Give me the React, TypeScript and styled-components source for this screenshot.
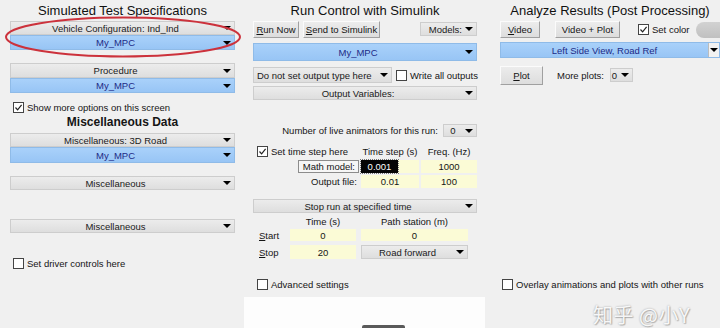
import React from "react";
import styled, { createGlobalStyle } from "styled-components";

const Global = createGlobalStyle`
  html, body {
    margin: 0;
    padding: 0;
    background: #f0f0f0;
  }
`;

const Page = styled.div`
  position: relative;
  display: flex;
  width: 720px;
  height: 328px;
  padding: 2px 0 0 10px;
  box-sizing: border-box;
  overflow: hidden;
  background: #f0f0f0;
  font-family: "Liberation Sans", Arial, sans-serif;
  font-size: 9.5px;
  color: #151515;
`;

const Column = styled.div<{ $w: number; $ml?: number }>`
  display: flex;
  flex-direction: column;
  flex-shrink: 0;
  width: ${(p) => p.$w}px;
  margin-left: ${(p) => p.$ml ?? 0}px;
`;

const Title = styled.div`
  height: 19px;
  line-height: 17px;
  font-size: 13px;
  text-align: center;
  white-space: nowrap;
  color: #111;
`;

const SubTitle = styled.div<{ $mt?: number }>`
  margin-top: ${(p) => p.$mt ?? 0}px;
  height: 15px;
  line-height: 15px;
  font-size: 12px;
  font-weight: bold;
  text-align: center;
`;

const Combo = styled.div<{
  $blue?: boolean;
  $h?: number;
  $mt?: number;
  $w?: number;
}>`
  display: flex;
  align-items: center;
  flex-shrink: 0;
  box-sizing: border-box;
  margin-top: ${(p) => p.$mt ?? 0}px;
  height: ${(p) => p.$h ?? 14}px;
  width: ${(p) => (p.$w ? `${p.$w}px` : "auto")};
  border: 1px solid ${(p) => (p.$blue ? "#8fbbe8" : "#cdcdcd")};
  background: ${(p) =>
    p.$blue
      ? "linear-gradient(#a9d1fa, #98c5f5)"
      : "linear-gradient(#ececec, #dedede)"};
  color: ${(p) => (p.$blue ? "#1d2a86" : "#1a1a1a")};
  white-space: nowrap;
`;

const ComboText = styled.span<{ $left?: boolean }>`
  flex: 1;
  text-align: ${(p) => (p.$left ? "left" : "center")};
  padding-left: ${(p) => (p.$left ? "3px" : "0")};
  overflow: hidden;
`;

const Arrow = styled.span<{ $boxed?: boolean }>`
  display: flex;
  align-items: center;
  justify-content: center;
  width: ${(p) => (p.$boxed ? "10px" : "14px")};
  align-self: stretch;
  border-left: ${(p) => (p.$boxed ? "1px solid #bcbcbc" : "none")};
  background: ${(p) => (p.$boxed ? "#f2f2f2" : "transparent")};
  &::after {
    content: "";
    border-left: 4px solid transparent;
    border-right: 4px solid transparent;
    border-top: 4px solid #000;
  }
`;

const Row = styled.div<{ $mt?: number; $h?: number }>`
  display: flex;
  align-items: center;
  flex-shrink: 0;
  margin-top: ${(p) => p.$mt ?? 0}px;
  height: ${(p) => p.$h ?? 14}px;
  white-space: nowrap;
`;

const Button = styled.button<{ $w: number; $h?: number; $ml?: number }>`
  box-sizing: border-box;
  width: ${(p) => p.$w}px;
  height: ${(p) => p.$h ?? 17}px;
  margin: 0 0 0 ${(p) => p.$ml ?? 0}px;
  padding: 0;
  font-family: inherit;
  font-size: 9.5px;
  color: #151515;
  background: linear-gradient(#ececec, #dddddd);
  border: 1px solid;
  border-color: #fbfbfb #a0a0a0 #a0a0a0 #fbfbfb;
  white-space: nowrap;
  u {
    text-decoration: underline;
  }
`;

const CheckRow = styled.label<{ $mt?: number; $ml?: number }>`
  display: flex;
  align-items: center;
  gap: 3px;
  flex-shrink: 0;
  height: 12px;
  margin-top: ${(p) => p.$mt ?? 0}px;
  margin-left: ${(p) => p.$ml ?? 3}px;
  white-space: nowrap;
`;

const Box = styled.span`
  display: flex;
  align-items: center;
  justify-content: center;
  box-sizing: border-box;
  width: 11px;
  height: 11px;
  border: 1px solid #444;
  background: #fff;
`;

const Check = ({
  on,
  children,
  mt,
  ml,
}: {
  on?: boolean;
  children: React.ReactNode;
  mt?: number;
  ml?: number;
}) => (
  <CheckRow $mt={mt} $ml={ml}>
    <Box>
      {on && (
        <svg width="9" height="9" viewBox="0 0 9 9">
          <path d="M1.5 4.5 L3.6 6.8 L7.6 1.8" fill="none" stroke="#222" strokeWidth="1.2" />
        </svg>
      )}
    </Box>
    <span>{children}</span>
  </CheckRow>
);

const Grid = styled.div<{ $cols: string; $mt?: number; $h?: number; $gap?: number }>`
  display: grid;
  grid-template-columns: ${(p) => p.$cols};
  column-gap: ${(p) => p.$gap ?? 2}px;
  align-items: center;
  flex-shrink: 0;
  margin-top: ${(p) => p.$mt ?? 0}px;
  height: ${(p) => p.$h ?? 13}px;
  white-space: nowrap;
`;

const Cell = styled.span<{ $align?: string; $pad?: number }>`
  text-align: ${(p) => p.$align ?? "center"};
  padding: 0 ${(p) => p.$pad ?? 0}px;
  u {
    text-decoration: underline;
  }
`;

const Field = styled.div`
  display: flex;
  align-items: center;
  justify-content: center;
  align-self: stretch;
  background: #fbfbd6;
`;

const Selected = styled.div`
  display: flex;
  align-items: center;
  align-self: stretch;
  background: #fbfbd6;
  span {
    display: flex;
    align-items: center;
    justify-content: center;
    align-self: stretch;
    width: 37px;
    background: #050505;
    color: #fff;
    outline: 1px dotted #777;
  }
`;

const FieldButton = styled.div`
  display: flex;
  align-items: center;
  justify-content: flex-end;
  align-self: stretch;
  margin-left: 45px;
  padding-right: 3px;
  box-sizing: border-box;
  border: 1px solid #8c8c8c;
  background: #f6f6f6;
`;

const Blank = styled.div`
  position: relative;
  flex: 1;
  margin: 7px -8px 0 -9px;
  background: #fdfdfd;
  &::after {
    content: "";
    position: absolute;
    left: 118px;
    bottom: 0;
    width: 43px;
    height: 3px;
    background: #5a5a5a;
    border-radius: 2px 2px 0 0;
  }
`;

const Pill = styled.span`
  margin-left: auto;
  width: 24px;
  height: 16px;
  border-radius: 8px 0 0 8px;
  background: linear-gradient(#d2d2d2, #c0c0c0);
`;

const Ellipse = styled.svg`
  position: absolute;
  left: 3px;
  top: 15px;
  pointer-events: none;
`;

const Watermark = styled.div`
  position: absolute;
  left: 593px;
  top: 305px;
  line-height: 1;
  font-family: "Noto Sans CJK SC", "Liberation Sans", sans-serif;
  font-size: 20px;
  letter-spacing: 0.5px;
  color: rgba(255, 255, 255, 0.92);
  text-shadow: 0 0 2px rgba(0, 0, 0, 0.35), 1px 1px 1px rgba(0, 0, 0, 0.2);
  white-space: nowrap;
`;

export default function App() {
  return (
    <>
      <Global />
      <Page>
        <Column $w={225}>
          <Title>Simulated Test Specifications</Title>
          <Combo>
            <ComboText>Vehicle Configuration: Ind_Ind</ComboText>
            <Arrow />
          </Combo>
          <Combo $blue $h={15}>
            <ComboText>My_MPC</ComboText>
            <Arrow />
          </Combo>
          <Combo $mt={13} $h={15}>
            <ComboText>Procedure</ComboText>
            <Arrow />
          </Combo>
          <Combo $blue $h={15}>
            <ComboText>My_MPC</ComboText>
            <Arrow />
          </Combo>
          <Check on mt={8}>
            Show more options on this screen
          </Check>
          <SubTitle $mt={2}>Miscellaneous Data</SubTitle>
          <Combo $mt={3}>
            <ComboText>Miscellaneous: 3D Road</ComboText>
            <Arrow />
          </Combo>
          <Combo $blue $h={16}>
            <ComboText>My_MPC</ComboText>
            <Arrow />
          </Combo>
          <Combo $mt={13}>
            <ComboText>Miscellaneous</ComboText>
            <Arrow />
          </Combo>
          <Combo $mt={29}>
            <ComboText>Miscellaneous</ComboText>
            <Arrow />
          </Combo>
          <Check mt={24}>Set driver controls here</Check>
        </Column>

        <Column $w={224} $ml={18}>
          <Title>Run Control with Simulink</Title>
          <Row $h={17}>
            <Button $w={46}>
              <u>R</u>un Now
            </Button>
            <Button $w={77} $ml={4}>
              <u>S</u>end to Simulink
            </Button>
            <Combo $w={57} style={{ marginLeft: "auto", alignSelf: "flex-start", marginTop: 1 }}>
              <ComboText style={{ textAlign: "right" }}>Models:</ComboText>
              <Arrow />
            </Combo>
          </Row>
          <Combo $blue $mt={5} $h={18}>
            <ComboText>My_MPC</ComboText>
            <Arrow />
          </Combo>
          <Row $mt={6} $h={16}>
            <Combo $w={139} $h={16}>
              <ComboText $left>Do not set output type here</ComboText>
              <Arrow />
            </Combo>
            <Check ml={4}>Write all outputs</Check>
          </Row>
          <Combo $mt={3}>
            <ComboText>Output Variables:</ComboText>
            <Arrow />
          </Combo>
          <Row $mt={24} $h={13}>
            <Cell style={{ marginLeft: "auto" }}>Number of live animators for this run:</Cell>
            <Combo $w={34} $h={13} style={{ marginLeft: 5 }}>
              <ComboText>0</ComboText>
              <Arrow />
            </Combo>
          </Row>
          <Grid $cols="106px 58px 56px" $mt={8}>
            <Check on ml={4}>
              Set time step here
            </Check>
            <Cell>Time step (s)</Cell>
            <Cell>Freq. (Hz)</Cell>
          </Grid>
          <Grid $cols="106px 58px 56px" $mt={2}>
            <FieldButton>Math model:</FieldButton>
            <Selected>
              <span>0.001</span>
            </Selected>
            <Field>1000</Field>
          </Grid>
          <Grid $cols="106px 58px 56px" $mt={2}>
            <Cell $align="right" $pad={2}>
              Output file:
            </Cell>
            <Field>0.01</Field>
            <Field>100</Field>
          </Grid>
          <Combo $mt={11}>
            <ComboText>Stop run at specified time</ComboText>
            <Arrow />
          </Combo>
          <Grid $cols="32px 66px 107px" $mt={3} $h={11} $gap={5}>
            <Cell />
            <Cell>Time (s)</Cell>
            <Cell>Path station (m)</Cell>
          </Grid>
          <Grid $cols="32px 66px 107px" $mt={2} $h={12} $gap={5}>
            <Cell $align="left" $pad={6}>
              <u>S</u>tart
            </Cell>
            <Field>0</Field>
            <Field>0</Field>
          </Grid>
          <Grid $cols="32px 66px 107px" $mt={4} $h={14} $gap={5}>
            <Cell $align="left" $pad={6}>
              <u>S</u>top
            </Cell>
            <Field>20</Field>
            <Combo $h={14}>
              <ComboText>Road forward</ComboText>
              <Arrow />
            </Combo>
          </Grid>
          <Check mt={19} ml={4}>
            Advanced settings
          </Check>
          <Blank />
        </Column>

        <Column $w={220} $ml={23}>
          <Title>Analyze Results (Post Processing)</Title>
          <Row $h={17}>
            <Button $w={40}>
              <u>V</u>ideo
            </Button>
            <Button $w={65} $ml={15}>
              Video + Plot
            </Button>
            <Check on ml={18}>
              Set color
            </Check>
            <Pill />
          </Row>
          <Combo $blue $mt={4} $h={16}>
            <ComboText>Left Side View, Road Ref</ComboText>
            <Arrow $boxed />
          </Combo>
          <Row $mt={7} $h={20}>
            <Button $w={43} $h={19}>
              <u>P</u>lot
            </Button>
            <Cell style={{ marginLeft: 14 }}>More plots:</Cell>
            <Combo $w={23} $h={14} style={{ marginLeft: 6 }}>
              <ComboText>0</ComboText>
              <Arrow />
            </Combo>
          </Row>
          <Check mt={193} ml={2}>
            Overlay animations and plots with other runs
          </Check>
        </Column>

        <Ellipse width="240" height="44" viewBox="0 0 240 44">
          <ellipse cx="120" cy="22" rx="117" ry="19.5" fill="none" stroke="#cc323c" strokeWidth="2" />
        </Ellipse>
        <Watermark>知乎 @小Y</Watermark>
      </Page>
    </>
  );
}
